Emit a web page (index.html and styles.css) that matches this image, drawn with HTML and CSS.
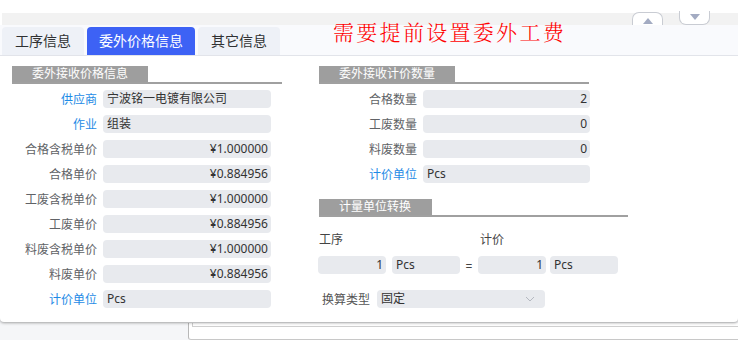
FILE: index.html
```html
<!DOCTYPE html>
<html lang="zh">
<head>
<meta charset="utf-8">
<link rel="stylesheet" href="styles.css">
</head>
<body>
<div class="panel">
  <div class="band"></div>
  <div class="btn-up"><span class="tri-up"></span></div>
  <div class="btn-down"><span class="tri-down"></span></div>
  <div class="tabbar">
    <div class="tab">工序信息</div>
    <div class="tab active">委外价格信息</div>
    <div class="tab">其它信息</div>
    <div class="notice">需要提前设置委外工费</div>
  </div>
  <div class="content">
    <div class="col left">
      <div class="sec"><span class="sec-title">委外接收价格信息</span></div>
      <div class="rows">
        <div class="row"><span class="lbl link">供应商</span><span class="inp">宁波铭一电镀有限公司</span></div>
        <div class="row"><span class="lbl link">作业</span><span class="inp">组装</span></div>
        <div class="row"><span class="lbl">合格含税单价</span><span class="inp num">¥1.000000</span></div>
        <div class="row"><span class="lbl">合格单价</span><span class="inp num">¥0.884956</span></div>
        <div class="row"><span class="lbl">工废含税单价</span><span class="inp num">¥1.000000</span></div>
        <div class="row"><span class="lbl">工废单价</span><span class="inp num">¥0.884956</span></div>
        <div class="row"><span class="lbl">料废含税单价</span><span class="inp num">¥1.000000</span></div>
        <div class="row"><span class="lbl">料废单价</span><span class="inp num">¥0.884956</span></div>
        <div class="row"><span class="lbl link">计价单位</span><span class="inp">Pcs</span></div>
      </div>
    </div>
    <div class="col right">
      <div class="sec"><span class="sec-title">委外接收计价数量</span></div>
      <div class="rows">
        <div class="row"><span class="lbl">合格数量</span><span class="inp num">2</span></div>
        <div class="row"><span class="lbl">工废数量</span><span class="inp num">0</span></div>
        <div class="row"><span class="lbl">料废数量</span><span class="inp num">0</span></div>
        <div class="row"><span class="lbl link">计价单位</span><span class="inp">Pcs</span></div>
      </div>
      <div class="sec sec2"><span class="sec-title short">计量单位转换</span></div>
      <div class="conv-labels"><span class="cl1">工序</span><span class="cl2">计价</span></div>
      <div class="conv">
        <span class="inp small num">1</span>
        <span class="inp small">Pcs</span>
        <span class="eq">=</span>
        <span class="inp small num">1</span>
        <span class="inp small">Pcs</span>
      </div>
      <div class="calc">
        <span class="calc-lbl">换算类型</span>
        <span class="inp select">固定<svg class="chev" width="10" height="6" viewBox="0 0 10 6"><path d="M1 1 L5 5 L9 1" fill="none" stroke="#b4b8c0" stroke-width="1"/></svg></span>
      </div>
    </div>
  </div>
</div>
<div class="below">
  <div class="outer"><div class="inner"></div></div>
</div>
</body>
</html>
```
FILE: styles.css
```css
* { box-sizing: border-box; }
body {
  margin: 0;
  background: #f5f6f8;
  font-family: "Noto Sans", "Noto Sans CJK SC", sans-serif;
  font-size: 12px;
  color: #333;
  overflow: hidden;
}
.panel {
  position: relative;
  height: 322px;
  background: #fff;
  box-shadow: 0 1px 3px rgba(0,0,0,0.35);
  padding-top: 13px;
  border-radius: 0 0 4px 4px;
}
.band {
  height: 12px;
  background: #f2f2f2;
  margin-left: 2px;
}
.btn-up, .btn-down {
  position: absolute;
  width: 31px;
  background: #fff;
  border: 1px solid #c9ccd3;
  display: flex;
  justify-content: center;
  align-items: center;
}
.btn-up {
  left: 632px;
  top: 12px;
  height: 14px;
  border-bottom: none;
  border-radius: 7px 7px 0 0;
}
.btn-down {
  left: 679px;
  top: 11px;
  height: 14px;
  border-top: none;
  border-radius: 0 0 7px 7px;
}
.tri-up {
  width: 0; height: 0;
  border-left: 5px solid transparent;
  border-right: 5px solid transparent;
  border-bottom: 6px solid #a3abc2;
  margin-top: 2px;
}
.tri-down {
  width: 0; height: 0;
  border-left: 5px solid transparent;
  border-right: 5px solid transparent;
  border-top: 6px solid #a3abc2;
  margin-top: -2px;
}
.tabbar {
  position: relative;
  height: 31px;
  background: #f9fafd;
  border-bottom: 1px solid #e2e4ea;
  display: flex;
  align-items: flex-end;
  padding-left: 2px;
  gap: 3px;
}
.tab {
  height: 28px;
  padding: 0 13px;
  background: #eef1f7;
  border-radius: 4px 4px 0 0;
  font-size: 14px;
  line-height: 28px;
  color: #303133;
}
.tab.active {
  background: #3d62f5;
  color: #fff;
  padding: 0 12px;
}
.notice {
  align-self: flex-start;
  margin-left: 50px;
  margin-top: -7px;
  line-height: 26px;
  color: #ff0000;
  font-size: 21px;
  letter-spacing: 2.3px;
  font-family: "Noto Serif CJK SC", "Noto Sans CJK SC", serif;
  font-weight: 300;
}
.content {
  display: flex;
  padding: 10px 0 0 12px;
}
.col.left { width: 270px; }
.col.right { width: 309px; margin-left: 37px; }
.sec {
  height: 18px;
  border-bottom: 2px solid #a0a0a0;
  width: 270px;
  display: flex;
}
.sec2 { width: 309px; margin-top: 16px; }
.sec-title {
  width: 136px;
  background: #9e9e9e;
  color: #fff;
  font-size: 12px;
  line-height: 16px;
  padding-left: 20px;
}
.sec-title.short { width: 113px; }
.rows {
  display: flex;
  flex-direction: column;
  gap: 7px;
  margin-top: 6px;
}
.row {
  display: flex;
  align-items: center;
  height: 18px;
  gap: 6px;
}
.left .lbl { width: 85px; }
.right .lbl { width: 98px; }
.lbl {
  text-align: right;
  color: #606266;
  font-size: 12px;
  white-space: nowrap;
}
.lbl.link { color: #1e8be6; }
.inp {
  height: 18px;
  width: 168px;
  background: #e8eaee;
  border-radius: 4px;
  padding: 0 3px 0 4px;
  line-height: 18px;
  font-size: 12px;
  color: #333;
  white-space: nowrap;
}
.right .inp { width: 167px; }
.inp.num { text-align: right; }
.conv-labels {
  display: flex;
  margin-top: 14px;
  height: 18px;
  line-height: 18px;
  color: #444;
}
.cl1 { width: 161px; }
.conv {
  display: flex;
  align-items: center;
  margin-top: 6px;
  margin-left: -1px;
}
.right .inp.small { width: 68px; }
.conv .inp:nth-child(2) { margin-left: 6px; }
.conv .inp:nth-child(5) { margin-left: 4px; }
.eq {
  width: 18px;
  text-align: center;
  color: #444;
  padding-top: 3px;
}
.calc {
  display: flex;
  align-items: center;
  margin-top: 15px;
  margin-left: 3px;
}
.calc-lbl {
  color: #555;
  width: 55px;
}
.right .inp.select {
  width: 168px;
  position: relative;
}
.chev {
  position: absolute;
  right: 10px;
  top: 6px;
}
.below {
  padding-left: 188px;
  padding-top: 1px;
}
.outer {
  height: 17px;
  border-left: 1px solid #b8b8b8;
  border-bottom: 1px solid #c8c8c8;
  border-radius: 0 0 0 3px;
  background: #fff;
  padding-left: 3px;
}
.inner {
  height: 4px;
  border-left: 1px solid #cfcfcf;
  border-bottom: 1px solid #cfcfcf;
}
```
